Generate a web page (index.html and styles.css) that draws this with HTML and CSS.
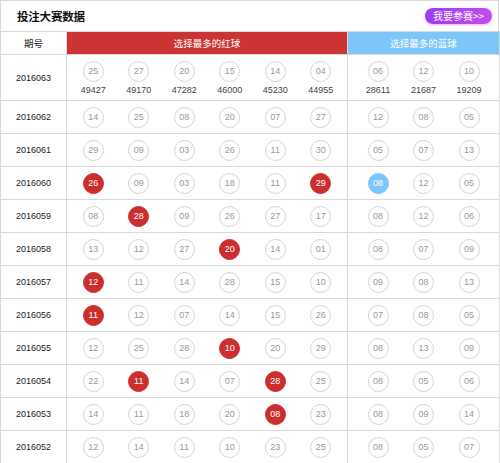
FILE: index.html
```html
<!DOCTYPE html>
<html lang="zh">
<head>
<meta charset="utf-8">
<link rel="stylesheet" href="styles.css">
</head>
<body>
<div class="panel">
  <div class="title">
    <span class="title-text">投注大赛数据</span>
    <a class="join">我要参赛&gt;&gt;</a>
  </div>
  <table class="grid">
    <colgroup><col class="c1"><col class="c2"><col class="c3"></colgroup>
    <thead>
      <tr><th class="ph">期号</th><th class="red-head">选择最多的红球</th><th class="blue-head">选择最多的蓝球</th></tr>
    </thead>
    <tbody>
      <tr class="first">
        <td class="period">2016063</td>
        <td><div class="balls">
          <div class="slot"><span class="ball">25</span><span class="cnt">49427</span></div>
          <div class="slot"><span class="ball">27</span><span class="cnt">49170</span></div>
          <div class="slot"><span class="ball">20</span><span class="cnt">47282</span></div>
          <div class="slot"><span class="ball">15</span><span class="cnt">46000</span></div>
          <div class="slot"><span class="ball">14</span><span class="cnt">45230</span></div>
          <div class="slot"><span class="ball">04</span><span class="cnt">44955</span></div>
        </div></td>
        <td><div class="balls">
          <div class="slot"><span class="ball">06</span><span class="cnt">28611</span></div>
          <div class="slot"><span class="ball">12</span><span class="cnt">21687</span></div>
          <div class="slot"><span class="ball">10</span><span class="cnt">19209</span></div>
        </div></td>
      </tr>
      <tr>
        <td class="period">2016062</td>
        <td><div class="balls"><div class="slot"><span class="ball">14</span></div><div class="slot"><span class="ball">25</span></div><div class="slot"><span class="ball">08</span></div><div class="slot"><span class="ball">20</span></div><div class="slot"><span class="ball">07</span></div><div class="slot"><span class="ball">27</span></div></div></td>
        <td><div class="balls"><div class="slot"><span class="ball">12</span></div><div class="slot"><span class="ball">08</span></div><div class="slot"><span class="ball">05</span></div></div></td>
      </tr>
      <tr>
        <td class="period">2016061</td>
        <td><div class="balls"><div class="slot"><span class="ball">29</span></div><div class="slot"><span class="ball">09</span></div><div class="slot"><span class="ball">03</span></div><div class="slot"><span class="ball">26</span></div><div class="slot"><span class="ball">11</span></div><div class="slot"><span class="ball">30</span></div></div></td>
        <td><div class="balls"><div class="slot"><span class="ball">05</span></div><div class="slot"><span class="ball">07</span></div><div class="slot"><span class="ball">13</span></div></div></td>
      </tr>
      <tr>
        <td class="period">2016060</td>
        <td><div class="balls"><div class="slot"><span class="ball red">26</span></div><div class="slot"><span class="ball">09</span></div><div class="slot"><span class="ball">03</span></div><div class="slot"><span class="ball">18</span></div><div class="slot"><span class="ball">11</span></div><div class="slot"><span class="ball red">29</span></div></div></td>
        <td><div class="balls"><div class="slot"><span class="ball blue">08</span></div><div class="slot"><span class="ball">12</span></div><div class="slot"><span class="ball">05</span></div></div></td>
      </tr>
      <tr>
        <td class="period">2016059</td>
        <td><div class="balls"><div class="slot"><span class="ball">08</span></div><div class="slot"><span class="ball red">28</span></div><div class="slot"><span class="ball">09</span></div><div class="slot"><span class="ball">26</span></div><div class="slot"><span class="ball">27</span></div><div class="slot"><span class="ball">17</span></div></div></td>
        <td><div class="balls"><div class="slot"><span class="ball">08</span></div><div class="slot"><span class="ball">12</span></div><div class="slot"><span class="ball">06</span></div></div></td>
      </tr>
      <tr>
        <td class="period">2016058</td>
        <td><div class="balls"><div class="slot"><span class="ball">13</span></div><div class="slot"><span class="ball">12</span></div><div class="slot"><span class="ball">27</span></div><div class="slot"><span class="ball red">20</span></div><div class="slot"><span class="ball">14</span></div><div class="slot"><span class="ball">01</span></div></div></td>
        <td><div class="balls"><div class="slot"><span class="ball">08</span></div><div class="slot"><span class="ball">07</span></div><div class="slot"><span class="ball">09</span></div></div></td>
      </tr>
      <tr>
        <td class="period">2016057</td>
        <td><div class="balls"><div class="slot"><span class="ball red">12</span></div><div class="slot"><span class="ball">11</span></div><div class="slot"><span class="ball">14</span></div><div class="slot"><span class="ball">28</span></div><div class="slot"><span class="ball">15</span></div><div class="slot"><span class="ball">10</span></div></div></td>
        <td><div class="balls"><div class="slot"><span class="ball">09</span></div><div class="slot"><span class="ball">08</span></div><div class="slot"><span class="ball">13</span></div></div></td>
      </tr>
      <tr>
        <td class="period">2016056</td>
        <td><div class="balls"><div class="slot"><span class="ball red">11</span></div><div class="slot"><span class="ball">12</span></div><div class="slot"><span class="ball">07</span></div><div class="slot"><span class="ball">14</span></div><div class="slot"><span class="ball">15</span></div><div class="slot"><span class="ball">26</span></div></div></td>
        <td><div class="balls"><div class="slot"><span class="ball">07</span></div><div class="slot"><span class="ball">08</span></div><div class="slot"><span class="ball">05</span></div></div></td>
      </tr>
      <tr>
        <td class="period">2016055</td>
        <td><div class="balls"><div class="slot"><span class="ball">12</span></div><div class="slot"><span class="ball">25</span></div><div class="slot"><span class="ball">28</span></div><div class="slot"><span class="ball red">10</span></div><div class="slot"><span class="ball">20</span></div><div class="slot"><span class="ball">29</span></div></div></td>
        <td><div class="balls"><div class="slot"><span class="ball">08</span></div><div class="slot"><span class="ball">13</span></div><div class="slot"><span class="ball">09</span></div></div></td>
      </tr>
      <tr>
        <td class="period">2016054</td>
        <td><div class="balls"><div class="slot"><span class="ball">22</span></div><div class="slot"><span class="ball red">11</span></div><div class="slot"><span class="ball">14</span></div><div class="slot"><span class="ball">07</span></div><div class="slot"><span class="ball red">28</span></div><div class="slot"><span class="ball">25</span></div></div></td>
        <td><div class="balls"><div class="slot"><span class="ball">08</span></div><div class="slot"><span class="ball">05</span></div><div class="slot"><span class="ball">06</span></div></div></td>
      </tr>
      <tr>
        <td class="period">2016053</td>
        <td><div class="balls"><div class="slot"><span class="ball">14</span></div><div class="slot"><span class="ball">11</span></div><div class="slot"><span class="ball">18</span></div><div class="slot"><span class="ball">20</span></div><div class="slot"><span class="ball red">08</span></div><div class="slot"><span class="ball">23</span></div></div></td>
        <td><div class="balls"><div class="slot"><span class="ball">08</span></div><div class="slot"><span class="ball">09</span></div><div class="slot"><span class="ball">14</span></div></div></td>
      </tr>
      <tr>
        <td class="period">2016052</td>
        <td><div class="balls"><div class="slot"><span class="ball">12</span></div><div class="slot"><span class="ball">14</span></div><div class="slot"><span class="ball">11</span></div><div class="slot"><span class="ball">10</span></div><div class="slot"><span class="ball">23</span></div><div class="slot"><span class="ball">25</span></div></div></td>
        <td><div class="balls"><div class="slot"><span class="ball">08</span></div><div class="slot"><span class="ball">05</span></div><div class="slot"><span class="ball">07</span></div></div></td>
      </tr>
    </tbody>
  </table>
</div>
</body>
</html>
```
FILE: styles.css
```css
html, body {
  margin: 0;
  padding: 0;
  background: #fff;
}
body {
  font-family: "Liberation Sans", "Noto Sans CJK SC", sans-serif;
  color: #333;
}
.panel {
  width: 499px;
}
.title {
  height: 30px;
  border: 1px solid #dadada;
  border-bottom: none;
  display: flex;
  align-items: center;
  justify-content: space-between;
  padding: 0 6px 0 16px;
}
.title-text {
  font-family: "Noto Sans CJK SC", sans-serif;
  font-size: 11.5px;
  font-weight: bold;
  color: #111;
  letter-spacing: -0.2px;
}
.join {
  display: flex;
  align-items: center;
  justify-content: center;
  width: 67px;
  height: 16px;
  margin-top: 0px;
  border-radius: 8px;
  background: linear-gradient(90deg, #9a3cf4, #c64de6);
  box-shadow: 0 1px 3px rgba(200, 80, 230, 0.45);
  color: #fff;
  font-family: "Noto Sans CJK SC", sans-serif;
  font-size: 10px;
  line-height: 16px;
}
.grid {
  width: 499px;
  border-collapse: collapse;
  table-layout: fixed;
}
.c1 { width: 66px; }
.c2 { width: 281px; }
.c3 { width: 152px; }
.grid th, .grid td {
  border: 1px solid #d9d9d9;
  padding: 0;
  text-align: center;
  vertical-align: middle;
}
.grid th {
  height: 22px;
  font-family: "Noto Sans CJK SC", sans-serif;
  font-size: 9.5px;
  font-weight: normal;
}
.ph {
  color: #222;
  font-size: 10px;
}
.red-head {
  background: #cc3333;
  color: #fff;
}
.blue-head {
  background: #7cc6f9;
  color: #fff;
}
.grid td {
  height: 32px;
}
.grid tr.first td {
  height: 45px;
}
.period {
  font-size: 9px;
  color: #222;
}
.balls {
  display: flex;
  justify-content: center;
}
.slot {
  width: 45.5px;
  display: flex;
  flex-direction: column;
  align-items: center;
}
.ball {
  box-sizing: border-box;
  width: 21px;
  height: 21px;
  border: 1px solid #d4d4d4;
  border-radius: 50%;
  display: flex;
  align-items: center;
  justify-content: center;
  font-size: 9px;
  color: #999;
}
.ball.red {
  background: #cc2e2e;
  border-color: #cc2e2e;
  color: #fff;
}
.ball.blue {
  background: #7cc6f9;
  border-color: #7cc6f9;
  color: #fff;
}
.cnt {
  margin-top: 3px;
  font-size: 9px;
  line-height: 10px;
  color: #444;
}
.first .balls {
  padding-top: 0;
}
```
